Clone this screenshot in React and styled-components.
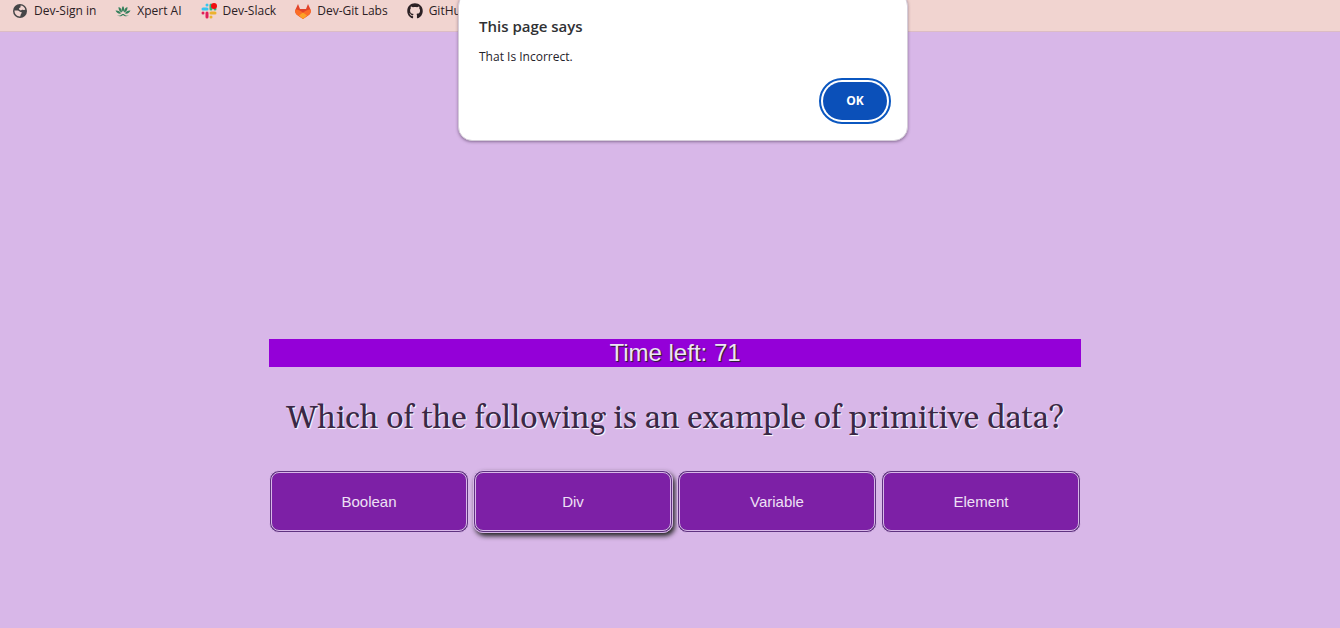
import React from "react";
import styled, { createGlobalStyle, css } from "styled-components";
import { FaGithub } from "react-icons/fa";

const GlobalStyle = createGlobalStyle`
  * { box-sizing: border-box; }
  body { margin: 0; background: #d8b7e8; }
`;

const Page = styled.div`
  min-height: 100vh;
  position: relative;
  overflow: hidden;
`;

const BookmarkBar = styled.nav`
  display: flex;
  align-items: flex-start;
  gap: 19px;
  height: 32px;
  padding: 2px 12px;
  background: #f1d4d0;
  border-bottom: 1px solid #dcbcc4;
`;

const Bookmark = styled.a`
  display: flex;
  align-items: center;
  gap: 6px;
  font: 12px/18px "Open Sans", sans-serif;
  color: #2b2024;
  text-decoration: none;
  white-space: nowrap;
  svg { flex: none; width: 16px; height: 16px; }
`;

const Dialog = styled.div`
  position: absolute;
  top: -8px;
  left: calc(50% - 212px);
  width: 450px;
  padding: 23px 20px 20px;
  display: flex;
  flex-direction: column;
  border: 1px solid #d5cdd9;
  border-radius: 14px;
  background: #fff;
  box-shadow: 0 1px 3px rgba(60, 40, 70, 0.5);
  font-family: "Open Sans", sans-serif;
`;

const DialogTitle = styled.h2`
  margin: 0;
  font-size: 15px;
  line-height: 20px;
  font-weight: 600;
  color: #303134;
`;

const DialogText = styled.p`
  margin: 11px 0 0;
  font-size: 12px;
  line-height: 20px;
  color: #25232b;
`;

const OkButton = styled.button`
  align-self: flex-end;
  width: 64px;
  height: 38px;
  margin-top: 15px;
  border: 0;
  border-radius: 19px;
  background: #0b50b9;
  color: #fff;
  font: 700 12px/20px "Open Sans", sans-serif;
  outline: 2px solid #0b57c0;
  outline-offset: 2px;
`;

const QuizArea = styled.main`
  display: flex;
  justify-content: center;
  padding: 307px 0 0 10px;
`;

const Quiz = styled.section`
  width: 812px;
  max-width: 100%;
  font-family: "Liberation Sans", Arial, sans-serif;
`;

const Timer = styled.div`
  background: #9400d8;
  color: #eee4f5;
  font-size: 24px;
  line-height: 28px;
  text-align: center;
  text-shadow: 1px 1px 1px #222;
`;

const Question = styled.h1`
  margin: 32px 0 31px;
  font: 400 32px/40px Georgia, Gelasio, "Liberation Serif", serif;
  color: #3a2845;
  text-align: center;
  text-shadow: 1px 1px 1px #fff;
`;

const Answers = styled.div`
  display: grid;
  grid-template-columns: repeat(4, 1fr);
  gap: 4px;
`;

const Answer = styled.button`
  height: 63px;
  border: 3px double #d8b7e8;
  border-radius: 10px;
  background:
    linear-gradient(#7d20a6, #7d20a6) padding-box,
    linear-gradient(#5f3380, #5f3380) border-box;
  color: #eee0f5;
  font: 15px/20px "Liberation Sans", Arial, sans-serif;
  ${(p) => p.$active && css`box-shadow: 2px 3px 5px #222;`}
`;

const GlobeIcon = () => (
  <svg viewBox="0 0 16 16" aria-hidden="true">
    <circle cx="8" cy="8" r="7" fill="#454547" />
    <path d="M2.5 7.5h3.2c1.5 0 1.8 1.6 3.1 1.6.9 0 1.2.7.6 1.4-.7.8-.7 1.6-1.2 2.9-3 .2-5.8-2-5.7-5.9zM8.6 2.6c2.4 0 4.3 1.7 4.7 4-1 .9-1.5.1-2.6.1s-1.3 1-2.4.6C7.2 6.900 6.500 6 7.200 5.300c.8-.7 1.600-.3 1.400-2.700z" fill="#f1d4d0" />
  </svg>
);

const LotusIcon = () => (
  <svg viewBox="0 0 16 16" aria-hidden="true" fill="#35805c">
    <path d="M8 3c1.600 2 1.600 4 0 6-1.600-2-1.600-4 0-6zM3.500 4c2.500.8 3.600 2.700 3.500 5.500C4.500 8.700 3.400 6.800 3.500 4zM12.500 4c.1 2.800-1 4.700-3.500 5.500C8.900 6.700 10 4.800 12.500 4zM.5 7.500c2.800-.2 4.500.7 5.700 3C3.500 11 1.500 10 .5 7.500zM15.500 7.500c-1 2.500-3 3.500-5.700 3 1.200-2.300 2.900-3.200 5.700-3z" />
    <path d="M2 12.300c2 .8 4 .4 5-1.300h2c1 1.700 3 2.100 5 1.300-2 1.400-4.500 1.200-6-.3-1.500 1.500-4 1.700-6 .3z" />
  </svg>
);

const SlackIcon = () => (
  <svg viewBox="0 0 16 16" aria-hidden="true" fill="none" strokeWidth="3" strokeLinecap="round">
    <path d="M6 2v0M2 6h4" stroke="#36c5f0" />
    <path d="M10 2v4M14 6h0" stroke="#2eb67d" />
    <path d="M10 10h4M10 14h0" stroke="#ecb22e" />
    <path d="M6 10v4M2 10h0" stroke="#e01e5a" />
    <circle cx="13" cy="3" r="3" fill="#f20d0d" />
  </svg>
);

const GitLabIcon = () => (
  <svg viewBox="0 0 16 16" aria-hidden="true">
    <path d="M3 1 5 6h6l2-5 2.500 5.500c.8 2.500 0 4.300-1.700 5.500L8 16l-5.800-4C.5 10.800-.3 9 .5 6.500z" fill="#e24329" />
    <path d="M.5 6.500C3.500 6.500 6 8 8 10c2-2 4.500-3.500 7.500-3.500.8 2.500 0 4.300-1.700 5.500L8 16l-5.800-4C.5 10.800-.3 9 .5 6.500z" fill="#fc6d26" />
    <path d="m4 12.500 4-3 4 3L8 16z" fill="#fca326" />
  </svg>
);

const bookmarks = [
  ["Dev-Sign in", GlobeIcon],
  ["Xpert AI", LotusIcon],
  ["Dev-Slack", SlackIcon],
  ["Dev-Git Labs", GitLabIcon],
  ["GitHub", FaGithub],
];

const answers = ["Boolean", "Div", "Variable", "Element"];

export default function App() {
  return (
    <Page>
      <GlobalStyle />
      <BookmarkBar>
        {bookmarks.map(([label, Icon]) => (
          <Bookmark href="#" key={label}><Icon />{label}</Bookmark>
        ))}
      </BookmarkBar>
      <QuizArea>
        <Quiz>
          <Timer>Time left: 71</Timer>
          <Question>Which of the following is an example of primitive data?</Question>
          <Answers>
            {answers.map((a) => <Answer key={a} $active={a === "Div"}>{a}</Answer>)}
          </Answers>
        </Quiz>
      </QuizArea>
      <Dialog role="alertdialog" aria-labelledby="dialog-title" aria-describedby="dialog-text">
        <DialogTitle id="dialog-title">This page says</DialogTitle>
        <DialogText id="dialog-text">That Is Incorrect.</DialogText>
        <OkButton>OK</OkButton>
      </Dialog>
    </Page>
  );
}
